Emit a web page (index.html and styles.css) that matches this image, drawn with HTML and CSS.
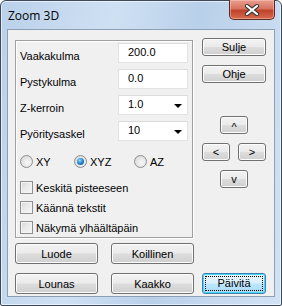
FILE: index.html
```html
<!DOCTYPE html>
<html lang="fi">
<head>
    <meta charset="UTF-8">
    <title>Zoom 3D</title>
    <link rel="stylesheet" href="styles.css">
</head>
<body>
    <div class="window">
        <div class="titlebar">
            <span class="title">Zoom 3D</span>
            <button class="close" aria-label="Sulje">
                <svg width="16" height="12" viewBox="0 0 16 12">
                    <path d="M3 2 L13 10 M13 2 L3 10" stroke="#3b3b3b" stroke-width="4.2" stroke-linecap="round"/>
                    <path d="M3 2 L13 10 M13 2 L3 10" stroke="#fff" stroke-width="2.2" stroke-linecap="round"/>
                </svg>
            </button>
        </div>

        <div class="client">
            <div class="top-row">
                <div class="panel">
                    <div class="field">
                        <label>Vaakakulma</label>
                        <div class="edit">200.0</div>
                    </div>
                    <div class="field">
                        <label>Pystykulma</label>
                        <div class="edit">0.0</div>
                    </div>
                    <div class="field">
                        <label>Z-kerroin</label>
                        <div class="edit combo">1.0<span class="arrow"></span></div>
                    </div>
                    <div class="field">
                        <label>Pyöritysaskel</label>
                        <div class="edit combo">10<span class="arrow"></span></div>
                    </div>

                    <div class="radios">
                        <span class="radio"><i></i>XY</span>
                        <span class="radio checked"><i></i>XYZ</span>
                        <span class="radio"><i></i>AZ</span>
                    </div>

                    <div class="checks">
                        <span class="check"><i></i>Keskitä pisteeseen</span>
                        <span class="check"><i></i>Käännä tekstit</span>
                        <span class="check"><i></i>Näkymä ylhäältäpäin</span>
                    </div>
                </div>

                <div class="side">
                    <button class="btn wide">Sulje</button>
                    <button class="btn wide">Ohje</button>
                    <div class="arrows">
                        <button class="btn small up">^</button>
                        <div class="lr">
                            <button class="btn small">&lt;</button>
                            <button class="btn small">&gt;</button>
                        </div>
                        <button class="btn small">v</button>
                    </div>
                </div>
            </div>

            <div class="bottom">
                <button class="btn big">Luode</button>
                <button class="btn big">Koillinen</button>
                <span></span>
                <button class="btn big">Lounas</button>
                <button class="btn big">Kaakko</button>
                <button class="btn wide default"><span>Päivitä</span></button>
            </div>
        </div>
    </div>
</body>
</html>
```

FILE: styles.css
```css
body {
    margin: 0;
    background: #ffffff;
    font-family: 'Liberation Sans', Arial, sans-serif;
    font-size: 11px;
}

.window {
    width: 282px;
    height: 306px;
    box-sizing: border-box;
    border: 1px solid #3c4a5c;
    border-radius: 6px 6px 2px 2px;
    background: linear-gradient(100deg, #bad1ea 0%, #cfe0f3 35%, #b9d0ea 60%, #d2e2f4 100%);
    padding: 0 6px 7px 6px;
    box-shadow: inset 0 0 0 1px rgba(255, 255, 255, 0.6);
}

.titlebar {
    height: 28px;
    position: relative;
    display: flex;
    align-items: center;
}

.title {
    font-family: 'Open Sans', 'Noto Sans', sans-serif;
    font-size: 12px;
    color: #000;
    margin-left: 1px;
    margin-top: 1px;
}

.close {
    position: absolute;
    top: -1px;
    right: 0;
    width: 46px;
    height: 20px;
    padding: 0;
    border: 1px solid #5a2a24;
    border-top: none;
    border-radius: 0 0 5px 5px;
    background: linear-gradient(#e8a08f 0%, #d7735f 45%, #c0422b 55%, #d66a4d 100%);
    box-shadow: inset 0 0 0 1px rgba(255, 200, 190, 0.5);
    display: flex;
    align-items: center;
    justify-content: center;
}

.client {
    height: 268px;
    box-sizing: border-box;
    border: 1px solid #8d9fb5;
    background: #f0f0f0;
    padding: 8px 0 0 7px;
}

.top-row {
    display: flex;
    align-items: flex-start;
}

.panel {
    width: 178px;
    height: 198px;
    box-sizing: border-box;
    margin-top: 2px;
    border: 1px solid #a0a0a0;
    box-shadow: 1px 1px 0 #ffffff, inset 1px 1px 0 #ffffff;
    padding: 2px 4px 0 4px;
}

.field {
    display: flex;
    justify-content: space-between;
    align-items: center;
    height: 20px;
    margin-bottom: 6px;
}

.field label {
    color: #000;
    padding-top: 6px;
}

.edit {
    width: 70px;
    height: 20px;
    box-sizing: border-box;
    border: 1px solid #e3e3e3;
    border-top-color: #dcdcdc;
    background: #fff;
    padding: 2px 0 0 9px;
    font-size: 11px;
    position: relative;
}

.combo .arrow {
    position: absolute;
    right: 5px;
    top: 8px;
    width: 0;
    height: 0;
    border-left: 4px solid transparent;
    border-right: 4px solid transparent;
    border-top: 4px solid #000;
}

.radios {
    display: flex;
    margin-top: 14px;
    height: 13px;
    align-items: center;
}

.radio {
    display: flex;
    align-items: center;
    gap: 3px;
}

.radio:nth-child(1) { width: 54px; }
.radio:nth-child(2) { width: 60px; }

.radio i {
    width: 13px;
    height: 13px;
    box-sizing: border-box;
    border-radius: 50%;
    border: 1px solid #8c8e90;
    background: radial-gradient(circle at 60% 60%, #f8f8f8 0%, #e2e2e2 60%, #cfcfcf 100%);
    position: relative;
}

.radio.checked i::after {
    content: '';
    position: absolute;
    left: 2px;
    top: 2px;
    width: 7px;
    height: 7px;
    border-radius: 50%;
    background: radial-gradient(circle at 40% 35%, #9adcf8 0%, #2a8ad4 45%, #0e4f8d 100%);
}

.checks {
    display: flex;
    flex-direction: column;
    gap: 7px;
    margin-top: 13px;
}

.check {
    display: flex;
    align-items: center;
    gap: 3px;
    height: 13px;
}

.check i {
    width: 13px;
    height: 13px;
    box-sizing: border-box;
    border: 1px solid #8e8f8f;
    background: linear-gradient(135deg, #d8d8d8 0%, #ebebeb 50%, #f6f6f6 100%);
    box-shadow: inset 0 0 0 1px #f4f4f4;
}

.side {
    margin-left: 9px;
    display: flex;
    flex-direction: column;
}

.btn {
    box-sizing: border-box;
    border: 1px solid #707070;
    border-radius: 3px;
    background: linear-gradient(#f2f2f2 0%, #ebebeb 48%, #dddddd 52%, #cfcfcf 100%);
    box-shadow: inset 0 0 0 1px #fcfcfc;
    font-family: 'Liberation Sans', Arial, sans-serif;
    font-size: 11px;
    color: #000;
    padding: 0;
}

.btn.wide {
    width: 64px;
    height: 18px;
}

.side .btn.wide + .btn.wide {
    margin-top: 9px;
}

.arrows {
    margin-top: 33px;
    display: flex;
    flex-direction: column;
    align-items: center;
    gap: 9px;
}

.btn.small {
    width: 28px;
    height: 18px;
}

.btn.up {
    padding-top: 3px;
}

.lr {
    width: 64px;
    display: flex;
    justify-content: space-between;
}

.bottom {
    display: grid;
    grid-template-columns: 83px 83px 64px;
    column-gap: 13px;
    row-gap: 9px;
    margin-top: 5px;
    margin-right: 8px;
}

.btn.big {
    height: 21px;
}

.bottom .btn.wide {
    height: 21px;
    margin-left: -5px;
}

.btn.default {
    border-color: #3c7fb1;
    box-shadow: inset 0 0 0 1px #48d8fb;
    background: linear-gradient(#eaf6fd 0%, #d9f0fc 48%, #bee6fd 52%, #a7d9f5 100%);
    padding: 2px;
}

.btn.default span {
    display: block;
    height: 100%;
    box-sizing: border-box;
    border: 1px dotted #000;
    line-height: 13px;
}
```
